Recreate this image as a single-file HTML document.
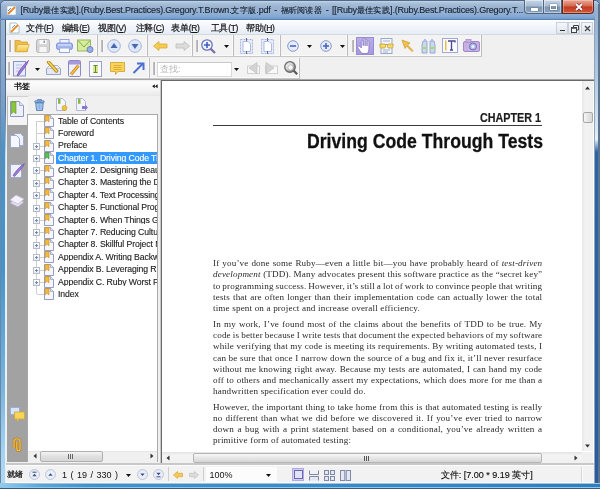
<!DOCTYPE html><html><head><meta charset="utf-8"><style>
*{margin:0;padding:0;box-sizing:border-box}
html,body{width:600px;height:489px;overflow:hidden;background:#6f93bc;font-family:"Liberation Sans",sans-serif;}
.a{position:absolute;display:block}
.t{position:absolute;white-space:nowrap;line-height:1}
</style></head><body><div class="a" style="left:0;top:0;width:600px;height:489px;overflow:hidden;filter:blur(0.3px)">
<div class="a" style="left:0;top:0;width:600px;height:489px;background:linear-gradient(180deg,#aac6e4 0,#bcd3eb 8px,#a6c2e2 18px,#8ab0da 40px,#5ea3d3 150px,#4496cd 300px,#3d8cc8 489px);border-radius:5px 5px 0 0;border:1px solid #4f6b8c"></div>
<div class="a" style="left:1px;top:1px;width:598px;height:19px;border-radius:5px 5px 0 0;background:linear-gradient(#c6d6e8 0,#aac0d8 2px,#9cb4d2 6px,#94b0d2 12px,#80a8d6 16px,#6e98c8 18px,#4c6c92 19px)"></div>
<div class="a" style="left:0;top:18px;width:1px;height:466px;background:#6d87a3"></div>
<div class="a" style="left:1px;top:20px;width:4px;height:464px;background:linear-gradient(#98b4d4,#7aa0cc 80px,#4a92c8 130px,#4494cc 250px,#78b6e0 370px,#a4d2f0 430px,#b0d8f2 464px)"></div>
<div class="a" style="left:5px;top:20px;width:1px;height:464px;background:linear-gradient(#4a5c74,#5a7090 90px,#c8dcee 135px,#e2eef8 200px,#e8f2fa)"></div>
<div class="a" style="left:594px;top:20px;width:1px;height:464px;background:#8fa5bd"></div>
<div class="a" style="left:595px;top:14px;width:3px;height:470px;background:linear-gradient(#98b0cc,#b0c8e0 60px,#dce8f4 118px,#eaf2fa 125px,#2e64a4 138px,#2a5c9c 484px)"></div>
<div class="a" style="left:598px;top:4px;width:2px;height:485px;background:#5a7490"></div>
<div class="a" style="left:0;top:483px;width:600px;height:1px;background:#9ec4e0"></div>
<div class="a" style="left:0;top:484px;width:600px;height:3px;background:linear-gradient(90deg,#90ccee,#5aa6da 40px,#3f92cc 90px,#3a8cc8 50%,#2f7fc0)"></div>
<div class="a" style="left:0;top:487px;width:600px;height:1px;background:#8cc8ec"></div>
<div class="a" style="left:0;top:488px;width:600px;height:1px;background:#3d5a78"></div>
<svg class="a" style="left:7px;top:6px" width="9" height="9" viewBox="0 0 9 9"><rect x="0" y="0" width="9" height="9" fill="#fff" stroke="#9ab" stroke-width=".6"/><path d="M1 8 L8 1" stroke="#e58a2a" stroke-width="2"/><path d="M1 5 L4 2" stroke="#5a8ac8" stroke-width="1"/></svg>
<div class="t" id="TT" style="left:20.5px;top:6px;font-size:9px;letter-spacing:-0.2px;word-spacing:1.3px;color:#1a2636;-webkit-text-stroke:0.15px #1a2636">[Ruby<span style="font-size:8px;font-weight:500;letter-spacing:0.3px">最佳实践</span>].(Ruby.Best.Practices).Gregory.T.Brown.<span style="font-size:8px;font-weight:500;letter-spacing:0.3px">文字版</span>.pdf - <span style="font-size:8px;font-weight:500;letter-spacing:0.3px">福昕阅读器</span> - [[Ruby<span style="font-size:8px;font-weight:500;letter-spacing:0.3px">最佳实践</span>].(Ruby.Best.Practices).Gregory.T...</div>
<div class="a" style="left:524px;top:0;width:20px;height:14px;background:linear-gradient(#c8d6e6,#a8bcd4 45%,#7d96b4 55%,#8aa4c2);border:1px solid #4f6580;border-top:none;border-radius:0 0 0 4px;box-shadow:inset 0 0 0 1px rgba(255,255,255,.45)"></div>
<div class="a" style="left:531px;top:8px;width:7px;height:2.5px;background:#fff;box-shadow:0 0 1px #223"></div>
<div class="a" style="left:543px;top:0;width:19px;height:14px;background:linear-gradient(#c8d6e6,#a8bcd4 45%,#7d96b4 55%,#8aa4c2);border:1px solid #4f6580;border-top:none;box-shadow:inset 0 0 0 1px rgba(255,255,255,.45)"></div>
<div class="a" style="left:549.5px;top:4px;width:7px;height:6px;border:1px solid #fff;border-top-width:2px;box-shadow:0 0 1px #223,inset 0 0 1px #223"></div>
<div class="a" style="left:562px;top:0;width:32px;height:14px;background:linear-gradient(#eaa898,#d66a50 45%,#c23a20 55%,#d05a3a);border:1px solid #5a2a24;border-top:none;border-radius:0 0 4px 0;box-shadow:inset 0 0 0 1px rgba(255,220,210,.4)"></div>
<svg class="a" style="left:574.5px;top:3px" width="8" height="8" viewBox="0 0 8 8"><path d="M1 1L7 7M7 1L1 7" stroke="#5a2020" stroke-width="3"/><path d="M1 1L7 7M7 1L1 7" stroke="#fff" stroke-width="1.8"/></svg>
<div class="a" style="left:6px;top:20px;width:588px;height:15px;background:linear-gradient(#fcfdfe,#eef3f9 60%,#e4ebf4)"></div>
<svg class="a" style="left:9px;top:22px" width="11" height="12" viewBox="0 0 11 12"><path d="M1 1h6l3 3v7H1z" fill="#fff" stroke="#8aa" stroke-width=".7"/><path d="M2 10 L9 3" stroke="#e8902e" stroke-width="2"/><path d="M3 6 L6 3" stroke="#6a9ad0" stroke-width="1"/></svg>
<div class="t" style="left:26px;top:23.5px;font-size:8.5px;letter-spacing:-0.4px;color:#141414;-webkit-text-stroke:0.2px #141414"><span style="font-size:9px;font-weight:500;letter-spacing:-0.1px">文件</span>(<u>F</u>)</div>
<div class="t" style="left:61.5px;top:23.5px;font-size:8.5px;letter-spacing:-0.4px;color:#141414;-webkit-text-stroke:0.2px #141414"><span style="font-size:9px;font-weight:500;letter-spacing:-0.1px">编辑</span>(<u>E</u>)</div>
<div class="t" style="left:98px;top:23.5px;font-size:8.5px;letter-spacing:-0.4px;color:#141414;-webkit-text-stroke:0.2px #141414"><span style="font-size:9px;font-weight:500;letter-spacing:-0.1px">视图</span>(<u>V</u>)</div>
<div class="t" style="left:135.5px;top:23.5px;font-size:8.5px;letter-spacing:-0.4px;color:#141414;-webkit-text-stroke:0.2px #141414"><span style="font-size:9px;font-weight:500;letter-spacing:-0.1px">注释</span>(<u>C</u>)</div>
<div class="t" style="left:171px;top:23.5px;font-size:8.5px;letter-spacing:-0.4px;color:#141414;-webkit-text-stroke:0.2px #141414"><span style="font-size:9px;font-weight:500;letter-spacing:-0.1px">表单</span>(<u>R</u>)</div>
<div class="t" style="left:210.5px;top:23.5px;font-size:8.5px;letter-spacing:-0.4px;color:#141414;-webkit-text-stroke:0.2px #141414"><span style="font-size:9px;font-weight:500;letter-spacing:-0.1px">工具</span>(<u>T</u>)</div>
<div class="t" style="left:246px;top:23.5px;font-size:8.5px;letter-spacing:-0.4px;color:#141414;-webkit-text-stroke:0.2px #141414"><span style="font-size:9px;font-weight:500;letter-spacing:-0.1px">帮助</span>(<u>H</u>)</div>
<div class="a" style="left:556px;top:22px;width:12px;height:12px;background:linear-gradient(#f4f6f9,#e0e6ee);border:1px solid #c8d0da"></div>
<div class="a" style="left:560px;top:30px;width:5px;height:1px;background:#333"></div>
<div class="a" style="left:568px;top:22px;width:12px;height:12px;background:linear-gradient(#f4f6f9,#e0e6ee);border:1px solid #c8d0da"></div>
<svg class="a" style="left:570.5px;top:24.5px" width="8" height="8" viewBox="0 0 8 8"><path d="M2.5 .5h5v4.5h-2M2.5 .5v2" fill="none" stroke="#444" stroke-width="1"/><rect x=".5" y="2.5" width="5" height="5" fill="#f0f3f8" stroke="#444" stroke-width="1"/><path d="M.5 3h5" stroke="#444" stroke-width="1.5"/></svg>
<div class="a" style="left:581px;top:22px;width:12px;height:12px;background:linear-gradient(#f4f6f9,#e0e6ee);border:1px solid #c8d0da"></div>
<svg class="a" style="left:583.5px;top:25px" width="7" height="7" viewBox="0 0 7 7"><path d="M1 1L6 6M6 1L1 6" stroke="#444" stroke-width="1.2"/></svg>
<div class="a" style="left:6px;top:35px;width:588px;height:45px;background:#f0f0f0"></div>
<div class="a" style="left:6px;top:79px;width:588px;height:1px;background:#a8a8a8"></div>
<div class="a" style="left:6px;top:34px;width:588px;height:1px;background:#d4d8e0"></div>
<div class="a" style="left:6px;top:35px;width:92px;height:22px;background:#f3f3f3;border-right:1px solid #bcbcbc;border-bottom:1px solid #c8c8c8;box-shadow:inset -1px -1px 0 #fafafa"></div>
<div class="a" style="left:98px;top:35px;width:50px;height:22px;background:#f3f3f3;border-right:1px solid #bcbcbc;border-bottom:1px solid #c8c8c8;box-shadow:inset -1px -1px 0 #fafafa"></div>
<div class="a" style="left:148px;top:35px;width:45px;height:22px;background:#f3f3f3;border-right:1px solid #bcbcbc;border-bottom:1px solid #c8c8c8;box-shadow:inset -1px -1px 0 #fafafa"></div>
<div class="a" style="left:193px;top:35px;width:41px;height:22px;background:#f3f3f3;border-right:1px solid #bcbcbc;border-bottom:1px solid #c8c8c8;box-shadow:inset -1px -1px 0 #fafafa"></div>
<div class="a" style="left:234px;top:35px;width:47px;height:22px;background:#f3f3f3;border-right:1px solid #bcbcbc;border-bottom:1px solid #c8c8c8;box-shadow:inset -1px -1px 0 #fafafa"></div>
<div class="a" style="left:281px;top:35px;width:67px;height:22px;background:#f3f3f3;border-right:1px solid #bcbcbc;border-bottom:1px solid #c8c8c8;box-shadow:inset -1px -1px 0 #fafafa"></div>
<div class="a" style="left:348px;top:35px;width:134px;height:22px;background:#f3f3f3;border-right:1px solid #bcbcbc;border-bottom:1px solid #c8c8c8;box-shadow:inset -1px -1px 0 #fafafa"></div>
<div class="a" style="left:6px;top:58px;width:144px;height:21px;background:#f3f3f3;border-right:1px solid #bcbcbc;border-bottom:1px solid #c8c8c8;box-shadow:inset -1px -1px 0 #fafafa"></div>
<div class="a" style="left:150px;top:58px;width:150px;height:21px;background:#f3f3f3;border-right:1px solid #bcbcbc;border-bottom:1px solid #c8c8c8;box-shadow:inset -1px -1px 0 #fafafa"></div>
<div class="a" style="left:8.5px;top:40px;width:3px;height:12px;background:linear-gradient(90deg,#c8c8c8,#b0b0b0 50%,#f8f8f8 70%)"></div>
<div class="a" style="left:100.5px;top:40px;width:3px;height:12px;background:linear-gradient(90deg,#c8c8c8,#b0b0b0 50%,#f8f8f8 70%)"></div>
<div class="a" style="left:195.5px;top:40px;width:3px;height:12px;background:linear-gradient(90deg,#c8c8c8,#b0b0b0 50%,#f8f8f8 70%)"></div>
<div class="a" style="left:351.5px;top:40px;width:3px;height:12px;background:linear-gradient(90deg,#c8c8c8,#b0b0b0 50%,#f8f8f8 70%)"></div>
<div class="a" style="left:7.5px;top:62px;width:3px;height:13px;background:linear-gradient(90deg,#c8c8c8,#b0b0b0 50%,#f8f8f8 70%)"></div>
<div class="a" style="left:152.5px;top:62px;width:3px;height:13px;background:linear-gradient(90deg,#c8c8c8,#b0b0b0 50%,#f8f8f8 70%)"></div>
<svg class="a" style="left:14px;top:39px" width="16" height="14" viewBox="0 0 16 14"><defs><linearGradient id="fg" x1="0" y1="0" x2="0" y2="1"><stop offset="0" stop-color="#fdeaa0"/><stop offset="1" stop-color="#f2c244"/></linearGradient></defs><path d="M1 1.5h5l1.5 1.5h6v9.5H1z" fill="#eebc48" stroke="#d0a038" stroke-width=".8"/><path d="M1.2 12.8 L3.8 5.5h11.5l-2.6 7.3z" fill="url(#fg)" stroke="#d8a838" stroke-width=".8"/></svg>
<svg class="a" style="left:36px;top:39px" width="14" height="14" viewBox="0 0 14 14"><rect x=".5" y=".5" width="13" height="13" rx="2" fill="#d6d6d6" stroke="#b4b4b4"/><rect x="3.5" y="1" width="7" height="4" fill="#fafafa"/><rect x="7.5" y="1.5" width="1.5" height="2.5" fill="#9a9a9a"/><rect x="3" y="7.5" width="8" height="6" fill="#f6f6f6" stroke="#c4c4c4" stroke-width=".6"/></svg>
<svg class="a" style="left:56px;top:39px" width="17" height="14" viewBox="0 0 17 14"><rect x="4" y=".5" width="9" height="5" fill="#f0f4ff" stroke="#98a8dc"/><rect x=".5" y="4" width="16" height="6.5" rx="2" fill="#a4b6ee" stroke="#8292d4"/><rect x="2" y="5" width="13" height="2" fill="#c4d0f6"/><rect x="3.5" y="9" width="10" height="4.5" fill="#f8faff" stroke="#98a8dc"/></svg>
<svg class="a" style="left:77px;top:39px" width="17" height="14" viewBox="0 0 17 14"><rect x=".5" y="1" width="13" height="11" fill="#d4ec9c" stroke="#98b860"/><path d="M1 1.5 L7 8 L13 1.5" stroke="#88a850" fill="none"/><circle cx="13" cy="10.5" r="3" fill="#98b0e8" stroke="#6070b8" stroke-width=".8"/></svg>
<svg class="a" style="left:107px;top:39px" width="14" height="14" viewBox="0 0 14 14"><circle cx="7.0" cy="7.0" r="6.3" fill="#e4ecfc" stroke="#a0b0d8" stroke-width="1"/><circle cx="7.0" cy="7.0" r="4.5" fill="#dce6fa"/><path d="M3.5 9.0h7L7.0 4.0z" fill="#4a68b0"/></svg>
<svg class="a" style="left:128px;top:39px" width="14" height="14" viewBox="0 0 14 14"><circle cx="7.0" cy="7.0" r="6.3" fill="#e4ecfc" stroke="#a0b0d8" stroke-width="1"/><circle cx="7.0" cy="7.0" r="4.5" fill="#dce6fa"/><path d="M3.5 5.0h7L7.0 10.0z" fill="#4a68b0"/></svg>
<svg class="a" style="left:153px;top:41px" width="15" height="10" viewBox="0 0 15 10"><path d="M.5 5 L6 .5 V3 H14 V7 H6 V9.5z" fill="#f5cc50" stroke="#d8a838" stroke-width=".8"/></svg>
<svg class="a" style="left:175px;top:41px" width="15" height="10" viewBox="0 0 15 10"><path d="M14.5 5 L9 .5 V3 H1 V7 H9 V9.5z" fill="#dcdcdc" stroke="#bdbdbd" stroke-width=".8"/></svg>
<svg class="a" style="left:201px;top:39px" width="15" height="15" viewBox="0 0 15 15"><circle cx="6" cy="6" r="5.2" fill="#f4f6ff" stroke="#6a70b8" stroke-width="1.3"/><path d="M6 3v6M3 6h6" stroke="#3a60c0" stroke-width="1.6"/><path d="M9.5 9.5 L14 14" stroke="#7a6aa8" stroke-width="2.2"/></svg>
<svg class="a" style="left:224px;top:45px" width="5" height="3" viewBox="0 0 5 3"><path d="M0 0h5L2.5 3z" fill="#111"/></svg>
<svg class="a" style="left:239.5px;top:38px" width="13" height="16" viewBox="0 0 13 16"><rect x=".5" y="1.5" width="12" height="14" fill="#e6ecfa" stroke="#a8b6e0" stroke-dasharray="2 1"/><path d="M3 3.5h5l2.5 2.5v7.5H3z" fill="#fff" stroke="#9aa8dc" stroke-width=".8"/><path d="M6.5 0v3M6.5 13v3" stroke="#5a6ab0"/></svg>
<svg class="a" style="left:260.5px;top:38px" width="13" height="16" viewBox="0 0 13 16"><rect x=".5" y="1.5" width="12" height="14" fill="#e6ecfa" stroke="#a8b6e0" stroke-dasharray="2 1"/><path d="M3 3.5h5l2.5 2.5v7.5H3z" fill="#fff" stroke="#9aa8dc" stroke-width=".8"/><path d="M6.5 0v3M6.5 13v3" stroke="#5a6ab0"/></svg>
<svg class="a" style="left:286.5px;top:40px" width="12" height="12" viewBox="0 0 12 12"><circle cx="6" cy="6" r="5.3" fill="#e6ecfc" stroke="#8898d0"/><path d="M3 6h6" stroke="#4a68b8" stroke-width="1.6"/></svg>
<svg class="a" style="left:307px;top:45px" width="5" height="3" viewBox="0 0 5 3"><path d="M0 0h5L2.5 3z" fill="#111"/></svg>
<svg class="a" style="left:319.5px;top:40px" width="12" height="12" viewBox="0 0 12 12"><circle cx="6" cy="6" r="5.3" fill="#e6ecfc" stroke="#8898d0"/><path d="M3 6h6" stroke="#4a68b8" stroke-width="1.6"/><path d="M6 3v6" stroke="#4a68b8" stroke-width="1.6"/></svg>
<svg class="a" style="left:340px;top:45px" width="5" height="3" viewBox="0 0 5 3"><path d="M0 0h5L2.5 3z" fill="#111"/></svg>
<div class="a" style="left:356px;top:37px;width:18px;height:18px;background:linear-gradient(#b8aee8,#a698dc);border:1px solid #9a8ad4"></div>
<svg class="a" style="left:357px;top:38px" width="16" height="16" viewBox="0 0 16 16"><path d="M5 15.5 C3.5 13.5 1 10.5 .8 9.3 C.6 8 2 7.6 3 8.6 L4.3 10 V3.3 C4.3 2 6.2 2 6.2 3.3 V7.8 V1.6 C6.2 .3 8.1 .3 8.1 1.6 V7.8 V2 C8.1 .7 10 .7 10 2 V8 V3.5 C10 2.2 11.9 2.2 11.9 3.5 V10 C11.9 12.5 11.2 14 10.5 15.5z" fill="#fff" stroke="#7c6cc4" stroke-width=".7"/></svg>
<svg class="a" style="left:379px;top:38px" width="15" height="16" viewBox="0 0 15 16"><rect x="2" y=".5" width="11" height="15" fill="#f2f5fc" stroke="#98a8c8"/><path d="M4 3h7M4 12h7M4 14h5" stroke="#a8b4d0"/><path d="M.5 6.5h14" stroke="#c8a030" stroke-width="1"/><rect x="1" y="6" width="5.5" height="4" rx="1.2" fill="#f4d870" stroke="#c8a030" stroke-width=".8"/><rect x="8.5" y="6" width="5.5" height="4" rx="1.2" fill="#f4d870" stroke="#c8a030" stroke-width=".8"/></svg>
<svg class="a" style="left:401px;top:39px" width="13" height="13" viewBox="0 0 13 13"><path d="M1 1 L9 4 L6.5 6 L12 11.5 L11 12.5 L5.5 7 L4 9.5z" fill="#f4c048" stroke="#c89830" stroke-width=".7"/></svg>
<svg class="a" style="left:421px;top:38px" width="15" height="16" viewBox="0 0 15 16"><path d="M2 3h4v12H1V7z" fill="#c8d8f0" stroke="#8a9ac8" stroke-width=".8"/><path d="M9 3h4l1 4v8H9z" fill="#c8d8f0" stroke="#8a9ac8" stroke-width=".8"/><rect x="1.3" y="9" width="4.5" height="2" fill="#a8d870"/><rect x="9.3" y="9" width="4.5" height="2" fill="#a8d870"/><rect x="3" y="1" width="2" height="2" fill="#b0c0e0"/><rect x="10" y="1" width="2" height="2" fill="#b0c0e0"/></svg>
<svg class="a" style="left:442px;top:38px" width="16" height="15" viewBox="0 0 16 15"><rect x=".5" y=".5" width="15" height="14" fill="#fbfbff" stroke="#a0a8d8"/><rect x="3" y="2.5" width="1.5" height="10" fill="#e8c040"/><path d="M6 3h7v1.5M9.5 3v9M8 12h3" stroke="#4a4a8a" stroke-width="1.3" fill="none"/></svg>
<svg class="a" style="left:463px;top:39px" width="17" height="13" viewBox="0 0 17 13"><rect x=".5" y="2.5" width="16" height="10" rx="1.5" fill="#c8b0e0" stroke="#a088c8"/><rect x="3" y=".5" width="5" height="3" fill="#c8b0e0" stroke="#a088c8" stroke-width=".7"/><circle cx="10" cy="7.5" r="3.5" fill="#a8c0f0" stroke="#7a6ab8"/><circle cx="10" cy="7.5" r="1.5" fill="#eef"/></svg>
<svg class="a" style="left:13px;top:60px" width="16" height="17" viewBox="0 0 16 17"><rect x=".5" y="1.5" width="12" height="14.5" fill="#e8ecfa" stroke="#8a94c8"/><path d="M3 5h6M3 8h5M3 11h4" stroke="#aab2d8" stroke-width=".8"/><path d="M4 15.5 C6 11 9 6 15.5 .5 C14 5 10 10 5.5 15.5z" fill="#9a7ad0" stroke="#6a4aa8" stroke-width=".7"/></svg>
<svg class="a" style="left:35px;top:68px" width="5" height="3" viewBox="0 0 5 3"><path d="M0 0h5L2.5 3z" fill="#111"/></svg>
<svg class="a" style="left:46px;top:61px" width="15" height="14" viewBox="0 0 15 14"><path d="M.5 7.5h14v6h-14z" fill="#e4e8f6" stroke="#98a4c8"/><path d="M.5 7.5l3-3h8l3 3" fill="#f0f2fa" stroke="#98a4c8" stroke-width=".8"/><path d="M2.5 1 L10.5 10" stroke="#b88a20" stroke-width="3.4" stroke-linecap="round"/><path d="M2.5 1 L10.5 10" stroke="#f8d860" stroke-width="1.6" stroke-linecap="round"/></svg>
<svg class="a" style="left:68px;top:60px" width="13" height="17" viewBox="0 0 13 17"><rect x=".5" y=".5" width="12" height="16" rx="1" fill="#eef0fc" stroke="#8a88c8"/><rect x="1" y="1" width="11" height="3.5" fill="#a898dc"/><path d="M3 14.5 L10.5 5.5" stroke="#c88020" stroke-width="3"/><path d="M3 14.5 L10.5 5.5" stroke="#f8c040" stroke-width="1.6"/></svg>
<svg class="a" style="left:89px;top:61px" width="13" height="16" viewBox="0 0 13 16"><rect x=".5" y=".5" width="12" height="15" fill="#fbfbff" stroke="#98a0d0"/><rect x="4" y="4" width="5" height="8" fill="#d8e890"/><path d="M4.5 4.5h4M6.5 4.5v7M4.5 11.5h4" stroke="#6a8a30" stroke-width="1"/></svg>
<svg class="a" style="left:110px;top:62px" width="15" height="13" viewBox="0 0 15 13"><path d="M.5 .5h14v9H8l-2.5 3V9.5h-5z" fill="#f8d458" stroke="#d0a838" stroke-width=".9"/><path d="M3.5 3.5h8M3.5 5.5h8M3.5 7.5h8" stroke="#d8a030" stroke-width=".8"/></svg>
<svg class="a" style="left:132px;top:62px" width="13" height="12" viewBox="0 0 13 12"><path d="M1.5 11 L11 1.5" stroke="#4a70d0" stroke-width="2"/><path d="M5 1.5 H11.5 V8" stroke="#4a70d0" stroke-width="2" fill="none"/></svg>
<div class="a" style="left:157px;top:61.5px;width:75px;height:15px;background:#fff;border:1px solid #d8d8d8;border-top-color:#c8c8c8"></div>
<div class="t" style="left:160px;top:65px;font-size:8.5px;color:#b8b8b8">查找:</div>
<svg class="a" style="left:234px;top:68px" width="5" height="3" viewBox="0 0 5 3"><path d="M0 0h5L2.5 3z" fill="#111"/></svg>
<svg class="a" style="left:246.5px;top:62px" width="13" height="12" viewBox="0 0 13 12"><rect x=".5" y="4" width="12" height="7.5" fill="#f8f8f8" stroke="#d0d0d0"/><path d="M10 .5 L2 6 L10 11.5z" fill="#d4d4d4" stroke="#c0c0c0" stroke-width=".7"/></svg>
<svg class="a" style="left:264px;top:62px" width="14" height="12" viewBox="0 0 14 12"><rect x="1.5" y="4" width="12" height="7.5" fill="#f8f8f8" stroke="#d0d0d0"/><path d="M2 .5 L10 6 L2 11.5z" fill="#d4d4d4" stroke="#c0c0c0" stroke-width=".7"/></svg>
<svg class="a" style="left:283.5px;top:61px" width="14" height="14" viewBox="0 0 14 14"><defs><radialGradient id="sg" cx=".4" cy=".4" r=".6"><stop offset="0" stop-color="#f4f4f4"/><stop offset=".55" stop-color="#d8d8d8"/><stop offset="1" stop-color="#7a7a7a"/></radialGradient></defs><circle cx="6" cy="6" r="5.3" fill="url(#sg)" stroke="#6a6a6a" stroke-width="1.2"/><circle cx="6.5" cy="6.5" r="2.6" fill="#fafafa" stroke="#9a9a9a" stroke-width=".6"/><path d="M9.8 9.8 L13.2 13.2" stroke="#555" stroke-width="2.2"/></svg>
<div class="a" style="left:6px;top:80px;width:155px;height:384px;background:#f0f0f0"></div>
<div class="a" style="left:6px;top:80.5px;width:154px;height:15px;background:linear-gradient(#fcfcfc,#f4f4f4 60%,#e8e8e8)"></div>
<div class="t" style="left:14px;top:83px;font-size:8px;color:#111;font-weight:bold;letter-spacing:0.4px">书签</div>
<svg class="a" style="left:152px;top:84px" width="6" height="5" viewBox="0 0 6 5"><path d="M2.8 .3 L.2 2.3 L2.8 4.3z M5.6 .3 L3 2.3 L5.6 4.3z" fill="#111"/></svg>
<div class="a" style="left:7px;top:125px;width:20px;height:337px;background:#a2a2a2"></div>
<div class="a" style="left:7px;top:96px;width:21px;height:29px;background:#f4f4f4;border-left:1px solid #b8b8b8;border-top:1px solid #d0d0d0"></div>
<svg class="a" style="left:10px;top:101px" width="14" height="16" viewBox="0 0 14 16"><path d="M.5 .5h9l4 4v11H.5z" fill="#eef0f8" stroke="#8e98c0"/><path d="M9.5 .5v4h4" fill="#dde2f0" stroke="#8e98c0" stroke-width=".7"/><path d="M1.5 .8h4.5v12l-2.2-2-2.3 2z" fill="#8cc43c" stroke="#5a9428" stroke-width=".6"/></svg>
<svg class="a" style="left:10px;top:133px" width="14" height="15" viewBox="0 0 14 15"><path d="M4.5 .5h6l3 3v9h-9z" fill="#eef2fc" stroke="#a0aad0"/><path d="M.5 2.5h6l3 3v9h-9z" fill="#f6f8ff" stroke="#a0aad0"/></svg>
<svg class="a" style="left:10px;top:163px" width="15" height="15" viewBox="0 0 15 15"><rect x=".5" y="1.5" width="11" height="13" fill="#eef0fa" stroke="#a0a8d0"/><path d="M3 12.5 C5 9 9 4 14.5 .5 C13 4 9 9 4.5 13.5z" fill="#9a7ad0" stroke="#6a4aa8" stroke-width=".6"/></svg>
<svg class="a" style="left:9px;top:193px" width="16" height="15" viewBox="0 0 16 15"><path d="M1 10 L7 5 L15 9 L9 14z" fill="#e4dcf0" stroke="#b0a8cc" stroke-width=".7"/><path d="M1 7 L7 2 L15 6 L9 11z" fill="#f6f2fc" stroke="#c0b8d8" stroke-width=".7"/></svg>
<svg class="a" style="left:9.5px;top:407px" width="15" height="15" viewBox="0 0 15 15"><rect x=".5" y=".5" width="9" height="7" fill="#d8e4fa" stroke="#98a8d8" stroke-width=".8"/><rect x="4.5" y="5" width="10" height="7" fill="#f8d458" stroke="#d0a838" stroke-width=".8"/><path d="M7 12 L7 14.5 L9 12" fill="#f8d458" stroke="#d0a838" stroke-width=".6"/></svg>
<svg class="a" style="left:11.5px;top:437px" width="10" height="15" viewBox="0 0 10 15"><path d="M2 11 V4.5 C2 .8 8 .8 8 4.5 V11.5 C8 14.5 4.8 14.5 4.8 11.5 V5" stroke="#b88020" stroke-width="2.6" fill="none"/><path d="M2 11 V4.5 C2 .8 8 .8 8 4.5 V11.5 C8 14.5 4.8 14.5 4.8 11.5 V5" stroke="#f0c050" stroke-width="1.2" fill="none"/></svg>
<svg class="a" style="left:34px;top:99px" width="11" height="12" viewBox="0 0 11 12"><rect x=".8" y="1.8" width="9.4" height="1.8" rx=".6" fill="#9cc0ea" stroke="#3e6aa8" stroke-width=".7"/><rect x="3.8" y=".3" width="3.4" height="1.6" fill="#9cc0ea" stroke="#3e6aa8" stroke-width=".6"/><path d="M1.8 4h7.4l-.7 7.4H2.5z" fill="#b4d2f2" stroke="#3e6aa8" stroke-width=".8"/><path d="M4 5.2v5M5.5 5.2v5M7 5.2v5" stroke="#6a98d0" stroke-width=".6"/></svg>
<svg class="a" style="left:56px;top:98px" width="12" height="13" viewBox="0 0 12 13"><path d="M.5 .5h6l3 3v9h-9z" fill="#f4f4fc" stroke="#a0a8d0" stroke-width=".8"/><rect x="2" y=".8" width="2.5" height="5" fill="#88b848"/><circle cx="8.5" cy="10" r="2.5" fill="#f0c040" stroke="#c8a030" stroke-width=".6"/></svg>
<svg class="a" style="left:76px;top:98px" width="12" height="13" viewBox="0 0 12 13"><path d="M.5 .5h6l3 3v9h-9z" fill="#f4f4fc" stroke="#a0a8d0" stroke-width=".8"/><rect x="2" y=".8" width="2.5" height="5" fill="#88b848"/><path d="M6 8h3V6.5l3 3-3 3V11H6z" fill="#8a78d0"/></svg>
<div class="a" style="left:27px;top:114px;width:131px;height:348px;background:#fff;border:1px solid #a8a8a8;border-bottom:none"></div>
<div class="a" style="left:36px;top:120.7px;width:0;height:173.46px;border-left:1px solid #cfcfcf"></div>
<div class="a" style="left:37px;top:120.90px;width:7px;height:0;border-top:1px solid #cfcfcf"></div>
<svg class="a" style="left:44px;top:115.0px" width="10" height="12" viewBox="0 0 10 12"><path d="M.5 .5h6l3 3v8h-9z" fill="#f6f7fc" stroke="#7c86b4" stroke-width=".8"/><path d="M6.5 .5v3h3" fill="#e4e8f4" stroke="#7c86b4" stroke-width=".6"/><path d="M1.2 .6h3.8v6.2L3.1 5.3 1.2 6.8z" fill="#f4bc34" stroke="#c88a20" stroke-width=".6"/></svg>
<div class="t" style="left:58px;top:116.50px;font-size:8.7px;letter-spacing:-0.1px;color:#1c1c1c;-webkit-text-stroke:0.12px #1c1c1c;width:99px;overflow:hidden">Table of Contents</div>
<div class="a" style="left:37px;top:133.29px;width:7px;height:0;border-top:1px solid #cfcfcf"></div>
<svg class="a" style="left:44px;top:127.39px" width="10" height="12" viewBox="0 0 10 12"><path d="M.5 .5h6l3 3v8h-9z" fill="#f6f7fc" stroke="#7c86b4" stroke-width=".8"/><path d="M6.5 .5v3h3" fill="#e4e8f4" stroke="#7c86b4" stroke-width=".6"/><path d="M1.2 .6h3.8v6.2L3.1 5.3 1.2 6.8z" fill="#f4bc34" stroke="#c88a20" stroke-width=".6"/></svg>
<div class="t" style="left:58px;top:128.89px;font-size:8.7px;letter-spacing:-0.1px;color:#1c1c1c;-webkit-text-stroke:0.12px #1c1c1c;width:99px;overflow:hidden">Foreword</div>
<div class="a" style="left:37px;top:145.68px;width:7px;height:0;border-top:1px solid #cfcfcf"></div>
<div class="a" style="left:33px;top:142.68px;width:7px;height:7px;background:linear-gradient(#fff,#e8ecf4);border:1px solid #b4bccc"></div><div class="a" style="left:35px;top:145.68px;width:3px;height:1px;background:#7a88a8"></div><div class="a" style="left:36px;top:144.68px;width:1px;height:3px;background:#7a88a8"></div>
<svg class="a" style="left:44px;top:139.78px" width="10" height="12" viewBox="0 0 10 12"><path d="M.5 .5h6l3 3v8h-9z" fill="#f6f7fc" stroke="#7c86b4" stroke-width=".8"/><path d="M6.5 .5v3h3" fill="#e4e8f4" stroke="#7c86b4" stroke-width=".6"/><path d="M1.2 .6h3.8v6.2L3.1 5.3 1.2 6.8z" fill="#f4bc34" stroke="#c88a20" stroke-width=".6"/></svg>
<div class="t" style="left:58px;top:141.28px;font-size:8.7px;letter-spacing:-0.1px;color:#1c1c1c;-webkit-text-stroke:0.12px #1c1c1c;width:99px;overflow:hidden">Preface</div>
<div class="a" style="left:37px;top:158.07px;width:7px;height:0;border-top:1px solid #cfcfcf"></div>
<div class="a" style="left:33px;top:155.07px;width:7px;height:7px;background:linear-gradient(#fff,#e8ecf4);border:1px solid #b4bccc"></div><div class="a" style="left:35px;top:158.07px;width:3px;height:1px;background:#7a88a8"></div><div class="a" style="left:36px;top:157.07px;width:1px;height:3px;background:#7a88a8"></div>
<svg class="a" style="left:44px;top:152.17px" width="10" height="12" viewBox="0 0 10 12"><path d="M.5 .5h6l3 3v8h-9z" fill="#f6f7fc" stroke="#7c86b4" stroke-width=".8"/><path d="M6.5 .5v3h3" fill="#e4e8f4" stroke="#7c86b4" stroke-width=".6"/><path d="M1.2 .6h3.8v6.2L3.1 5.3 1.2 6.8z" fill="#5cc04a" stroke="#3a8a30" stroke-width=".6"/></svg>
<div class="a" style="left:56px;top:152.17px;width:101px;height:11.8px;background:#3399ff"></div>
<div class="t" style="left:58px;top:153.67px;font-size:8.7px;letter-spacing:-0.1px;color:#fff;-webkit-text-stroke:0.12px #fff;width:99px;overflow:hidden">Chapter 1. Driving Code Through Tests</div>
<div class="a" style="left:37px;top:170.46px;width:7px;height:0;border-top:1px solid #cfcfcf"></div>
<div class="a" style="left:33px;top:167.46px;width:7px;height:7px;background:linear-gradient(#fff,#e8ecf4);border:1px solid #b4bccc"></div><div class="a" style="left:35px;top:170.46px;width:3px;height:1px;background:#7a88a8"></div><div class="a" style="left:36px;top:169.46px;width:1px;height:3px;background:#7a88a8"></div>
<svg class="a" style="left:44px;top:164.56px" width="10" height="12" viewBox="0 0 10 12"><path d="M.5 .5h6l3 3v8h-9z" fill="#f6f7fc" stroke="#7c86b4" stroke-width=".8"/><path d="M6.5 .5v3h3" fill="#e4e8f4" stroke="#7c86b4" stroke-width=".6"/><path d="M1.2 .6h3.8v6.2L3.1 5.3 1.2 6.8z" fill="#f4bc34" stroke="#c88a20" stroke-width=".6"/></svg>
<div class="t" style="left:58px;top:166.06px;font-size:8.7px;letter-spacing:-0.1px;color:#1c1c1c;-webkit-text-stroke:0.12px #1c1c1c;width:99px;overflow:hidden">Chapter 2. Designing Beautiful APIs</div>
<div class="a" style="left:37px;top:182.85px;width:7px;height:0;border-top:1px solid #cfcfcf"></div>
<div class="a" style="left:33px;top:179.85px;width:7px;height:7px;background:linear-gradient(#fff,#e8ecf4);border:1px solid #b4bccc"></div><div class="a" style="left:35px;top:182.85px;width:3px;height:1px;background:#7a88a8"></div><div class="a" style="left:36px;top:181.85px;width:1px;height:3px;background:#7a88a8"></div>
<svg class="a" style="left:44px;top:176.95px" width="10" height="12" viewBox="0 0 10 12"><path d="M.5 .5h6l3 3v8h-9z" fill="#f6f7fc" stroke="#7c86b4" stroke-width=".8"/><path d="M6.5 .5v3h3" fill="#e4e8f4" stroke="#7c86b4" stroke-width=".6"/><path d="M1.2 .6h3.8v6.2L3.1 5.3 1.2 6.8z" fill="#f4bc34" stroke="#c88a20" stroke-width=".6"/></svg>
<div class="t" style="left:58px;top:178.45px;font-size:8.7px;letter-spacing:-0.1px;color:#1c1c1c;-webkit-text-stroke:0.12px #1c1c1c;width:99px;overflow:hidden">Chapter 3. Mastering the Dynamic Toolkit</div>
<div class="a" style="left:37px;top:195.24px;width:7px;height:0;border-top:1px solid #cfcfcf"></div>
<div class="a" style="left:33px;top:192.24px;width:7px;height:7px;background:linear-gradient(#fff,#e8ecf4);border:1px solid #b4bccc"></div><div class="a" style="left:35px;top:195.24px;width:3px;height:1px;background:#7a88a8"></div><div class="a" style="left:36px;top:194.24px;width:1px;height:3px;background:#7a88a8"></div>
<svg class="a" style="left:44px;top:189.34px" width="10" height="12" viewBox="0 0 10 12"><path d="M.5 .5h6l3 3v8h-9z" fill="#f6f7fc" stroke="#7c86b4" stroke-width=".8"/><path d="M6.5 .5v3h3" fill="#e4e8f4" stroke="#7c86b4" stroke-width=".6"/><path d="M1.2 .6h3.8v6.2L3.1 5.3 1.2 6.8z" fill="#f4bc34" stroke="#c88a20" stroke-width=".6"/></svg>
<div class="t" style="left:58px;top:190.84px;font-size:8.7px;letter-spacing:-0.1px;color:#1c1c1c;-webkit-text-stroke:0.12px #1c1c1c;width:99px;overflow:hidden">Chapter 4. Text Processing and File Management</div>
<div class="a" style="left:37px;top:207.63px;width:7px;height:0;border-top:1px solid #cfcfcf"></div>
<div class="a" style="left:33px;top:204.63px;width:7px;height:7px;background:linear-gradient(#fff,#e8ecf4);border:1px solid #b4bccc"></div><div class="a" style="left:35px;top:207.63px;width:3px;height:1px;background:#7a88a8"></div><div class="a" style="left:36px;top:206.63px;width:1px;height:3px;background:#7a88a8"></div>
<svg class="a" style="left:44px;top:201.73px" width="10" height="12" viewBox="0 0 10 12"><path d="M.5 .5h6l3 3v8h-9z" fill="#f6f7fc" stroke="#7c86b4" stroke-width=".8"/><path d="M6.5 .5v3h3" fill="#e4e8f4" stroke="#7c86b4" stroke-width=".6"/><path d="M1.2 .6h3.8v6.2L3.1 5.3 1.2 6.8z" fill="#f4bc34" stroke="#c88a20" stroke-width=".6"/></svg>
<div class="t" style="left:58px;top:203.23px;font-size:8.7px;letter-spacing:-0.1px;color:#1c1c1c;-webkit-text-stroke:0.12px #1c1c1c;width:99px;overflow:hidden">Chapter 5. Functional Programming Techniques</div>
<div class="a" style="left:37px;top:220.02px;width:7px;height:0;border-top:1px solid #cfcfcf"></div>
<div class="a" style="left:33px;top:217.02px;width:7px;height:7px;background:linear-gradient(#fff,#e8ecf4);border:1px solid #b4bccc"></div><div class="a" style="left:35px;top:220.02px;width:3px;height:1px;background:#7a88a8"></div><div class="a" style="left:36px;top:219.02px;width:1px;height:3px;background:#7a88a8"></div>
<svg class="a" style="left:44px;top:214.12px" width="10" height="12" viewBox="0 0 10 12"><path d="M.5 .5h6l3 3v8h-9z" fill="#f6f7fc" stroke="#7c86b4" stroke-width=".8"/><path d="M6.5 .5v3h3" fill="#e4e8f4" stroke="#7c86b4" stroke-width=".6"/><path d="M1.2 .6h3.8v6.2L3.1 5.3 1.2 6.8z" fill="#f4bc34" stroke="#c88a20" stroke-width=".6"/></svg>
<div class="t" style="left:58px;top:215.62px;font-size:8.7px;letter-spacing:-0.1px;color:#1c1c1c;-webkit-text-stroke:0.12px #1c1c1c;width:99px;overflow:hidden">Chapter 6. When Things Go Wrong</div>
<div class="a" style="left:37px;top:232.41px;width:7px;height:0;border-top:1px solid #cfcfcf"></div>
<div class="a" style="left:33px;top:229.41px;width:7px;height:7px;background:linear-gradient(#fff,#e8ecf4);border:1px solid #b4bccc"></div><div class="a" style="left:35px;top:232.41px;width:3px;height:1px;background:#7a88a8"></div><div class="a" style="left:36px;top:231.41px;width:1px;height:3px;background:#7a88a8"></div>
<svg class="a" style="left:44px;top:226.51px" width="10" height="12" viewBox="0 0 10 12"><path d="M.5 .5h6l3 3v8h-9z" fill="#f6f7fc" stroke="#7c86b4" stroke-width=".8"/><path d="M6.5 .5v3h3" fill="#e4e8f4" stroke="#7c86b4" stroke-width=".6"/><path d="M1.2 .6h3.8v6.2L3.1 5.3 1.2 6.8z" fill="#f4bc34" stroke="#c88a20" stroke-width=".6"/></svg>
<div class="t" style="left:58px;top:228.01px;font-size:8.7px;letter-spacing:-0.1px;color:#1c1c1c;-webkit-text-stroke:0.12px #1c1c1c;width:99px;overflow:hidden">Chapter 7. Reducing Cultural Barriers</div>
<div class="a" style="left:37px;top:244.80px;width:7px;height:0;border-top:1px solid #cfcfcf"></div>
<div class="a" style="left:33px;top:241.80px;width:7px;height:7px;background:linear-gradient(#fff,#e8ecf4);border:1px solid #b4bccc"></div><div class="a" style="left:35px;top:244.80px;width:3px;height:1px;background:#7a88a8"></div><div class="a" style="left:36px;top:243.80px;width:1px;height:3px;background:#7a88a8"></div>
<svg class="a" style="left:44px;top:238.9px" width="10" height="12" viewBox="0 0 10 12"><path d="M.5 .5h6l3 3v8h-9z" fill="#f6f7fc" stroke="#7c86b4" stroke-width=".8"/><path d="M6.5 .5v3h3" fill="#e4e8f4" stroke="#7c86b4" stroke-width=".6"/><path d="M1.2 .6h3.8v6.2L3.1 5.3 1.2 6.8z" fill="#f4bc34" stroke="#c88a20" stroke-width=".6"/></svg>
<div class="t" style="left:58px;top:240.40px;font-size:8.7px;letter-spacing:-0.1px;color:#1c1c1c;-webkit-text-stroke:0.12px #1c1c1c;width:99px;overflow:hidden">Chapter 8. Skillful Project Maintenance</div>
<div class="a" style="left:37px;top:257.19px;width:7px;height:0;border-top:1px solid #cfcfcf"></div>
<div class="a" style="left:33px;top:254.19px;width:7px;height:7px;background:linear-gradient(#fff,#e8ecf4);border:1px solid #b4bccc"></div><div class="a" style="left:35px;top:257.19px;width:3px;height:1px;background:#7a88a8"></div><div class="a" style="left:36px;top:256.19px;width:1px;height:3px;background:#7a88a8"></div>
<svg class="a" style="left:44px;top:251.29px" width="10" height="12" viewBox="0 0 10 12"><path d="M.5 .5h6l3 3v8h-9z" fill="#f6f7fc" stroke="#7c86b4" stroke-width=".8"/><path d="M6.5 .5v3h3" fill="#e4e8f4" stroke="#7c86b4" stroke-width=".6"/><path d="M1.2 .6h3.8v6.2L3.1 5.3 1.2 6.8z" fill="#f4bc34" stroke="#c88a20" stroke-width=".6"/></svg>
<div class="t" style="left:58px;top:252.79px;font-size:8.7px;letter-spacing:-0.1px;color:#1c1c1c;-webkit-text-stroke:0.12px #1c1c1c;width:99px;overflow:hidden">Appendix A. Writing Backwards-Compatible Code</div>
<div class="a" style="left:37px;top:269.58px;width:7px;height:0;border-top:1px solid #cfcfcf"></div>
<div class="a" style="left:33px;top:266.58px;width:7px;height:7px;background:linear-gradient(#fff,#e8ecf4);border:1px solid #b4bccc"></div><div class="a" style="left:35px;top:269.58px;width:3px;height:1px;background:#7a88a8"></div><div class="a" style="left:36px;top:268.58px;width:1px;height:3px;background:#7a88a8"></div>
<svg class="a" style="left:44px;top:263.68px" width="10" height="12" viewBox="0 0 10 12"><path d="M.5 .5h6l3 3v8h-9z" fill="#f6f7fc" stroke="#7c86b4" stroke-width=".8"/><path d="M6.5 .5v3h3" fill="#e4e8f4" stroke="#7c86b4" stroke-width=".6"/><path d="M1.2 .6h3.8v6.2L3.1 5.3 1.2 6.8z" fill="#f4bc34" stroke="#c88a20" stroke-width=".6"/></svg>
<div class="t" style="left:58px;top:265.18px;font-size:8.7px;letter-spacing:-0.1px;color:#1c1c1c;-webkit-text-stroke:0.12px #1c1c1c;width:99px;overflow:hidden">Appendix B. Leveraging Ruby's Standard Library</div>
<div class="a" style="left:37px;top:281.97px;width:7px;height:0;border-top:1px solid #cfcfcf"></div>
<div class="a" style="left:33px;top:278.97px;width:7px;height:7px;background:linear-gradient(#fff,#e8ecf4);border:1px solid #b4bccc"></div><div class="a" style="left:35px;top:281.97px;width:3px;height:1px;background:#7a88a8"></div><div class="a" style="left:36px;top:280.97px;width:1px;height:3px;background:#7a88a8"></div>
<svg class="a" style="left:44px;top:276.07px" width="10" height="12" viewBox="0 0 10 12"><path d="M.5 .5h6l3 3v8h-9z" fill="#f6f7fc" stroke="#7c86b4" stroke-width=".8"/><path d="M6.5 .5v3h3" fill="#e4e8f4" stroke="#7c86b4" stroke-width=".6"/><path d="M1.2 .6h3.8v6.2L3.1 5.3 1.2 6.8z" fill="#f4bc34" stroke="#c88a20" stroke-width=".6"/></svg>
<div class="t" style="left:58px;top:277.57px;font-size:8.7px;letter-spacing:-0.1px;color:#1c1c1c;-webkit-text-stroke:0.12px #1c1c1c;width:99px;overflow:hidden">Appendix C. Ruby Worst Practices</div>
<div class="a" style="left:37px;top:294.36px;width:7px;height:0;border-top:1px solid #cfcfcf"></div>
<svg class="a" style="left:44px;top:288.46px" width="10" height="12" viewBox="0 0 10 12"><path d="M.5 .5h6l3 3v8h-9z" fill="#f6f7fc" stroke="#7c86b4" stroke-width=".8"/><path d="M6.5 .5v3h3" fill="#e4e8f4" stroke="#7c86b4" stroke-width=".6"/><path d="M1.2 .6h3.8v6.2L3.1 5.3 1.2 6.8z" fill="#f4bc34" stroke="#c88a20" stroke-width=".6"/></svg>
<div class="t" style="left:58px;top:289.96px;font-size:8.7px;letter-spacing:-0.1px;color:#1c1c1c;-webkit-text-stroke:0.12px #1c1c1c;width:99px;overflow:hidden">Index</div>
<div class="a" style="left:28px;top:450.5px;width:129px;height:11.5px;background:#f0f0f0;border-top:1px solid #e6e6e6"></div>
<svg class="a" style="left:32.5px;top:453px" width="4" height="6" viewBox="0 0 4 6"><path d="M3.5 .5 L.5 3 L3.5 5.5z" fill="#333"/></svg>
<svg class="a" style="left:150px;top:453px" width="4" height="6" viewBox="0 0 4 6"><path d="M.5 .5 L3.5 3 L.5 5.5z" fill="#333"/></svg>
<div class="a" style="left:40px;top:451px;width:63px;height:10.5px;border-radius:2px;background:linear-gradient(#f4f4f4,#e0e0e0 50%,#d6d6d6);border:1px solid #b0b0b0"></div>
<div class="a" style="left:68px;top:453.5px;width:6px;height:5px;background:repeating-linear-gradient(90deg,#666 0 1px,transparent 1px 2px)"></div>
<div class="a" style="left:160px;top:80px;width:1px;height:384px;background:#c8c8c8"></div>
<div class="a" style="left:161px;top:80px;width:433px;height:384px;background:#fff;border-left:1px solid #6a6a6a;border-top:1px solid #6a6a6a"></div>
<div class="a" style="left:582px;top:81px;width:11px;height:370px;background:linear-gradient(90deg,#e8e8e8,#f2f2f2 30%,#f0f0f0)"></div>
<svg class="a" style="left:585px;top:86px" width="5" height="4" viewBox="0 0 5 4"><path d="M0 3.5 L2.5 .5 L5 3.5z" fill="#333"/></svg>
<svg class="a" style="left:585px;top:444px" width="5" height="4" viewBox="0 0 5 4"><path d="M0 .5 L2.5 3.5 L5 .5z" fill="#333"/></svg>
<div class="a" style="left:582.5px;top:112px;width:10.5px;height:10.5px;border-radius:2px;background:linear-gradient(90deg,#f6f6f6,#e4e4e4 50%,#d8d8d8);border:1px solid #a8a8a8"></div>
<div class="a" style="left:593px;top:81px;width:1px;height:383px;background:#fff"></div>
<div class="a" style="left:162px;top:451.5px;width:420px;height:12px;background:linear-gradient(#e4e4e4,#f4f4f4 30%,#f0f0f0)"></div>
<div class="a" style="left:582px;top:451.5px;width:11px;height:12px;background:#f0f0f0"></div>
<svg class="a" style="left:166px;top:455px" width="4" height="6" viewBox="0 0 4 6"><path d="M3.5 .5 L.5 3 L3.5 5.5z" fill="#333"/></svg>
<svg class="a" style="left:574px;top:455px" width="4" height="6" viewBox="0 0 4 6"><path d="M.5 .5 L3.5 3 L.5 5.5z" fill="#333"/></svg>
<div class="a" style="left:192.5px;top:452.8px;width:349px;height:10px;border-radius:2px;background:linear-gradient(#f8f8f8,#e6e6e6 50%,#d6d6d6);border:1px solid #b4b4b4"></div>
<div class="a" style="left:364px;top:455.5px;width:6px;height:5px;background:repeating-linear-gradient(90deg,#555 0 1px,transparent 1px 2px)"></div>
<div class="a" style="left:212.7px;top:125px;width:329.5px;height:1px;background:#3a3a3a"></div>
<div class="t" id="H1" style="left:479.5px;top:111.7px;font-size:12.5px;font-weight:bold;color:#1c1c1c;-webkit-text-stroke:0.2px #1c1c1c;transform-origin:0 0;transform:scaleX(0.8610)">CHAPTER 1</div>
<div class="t" id="H2" style="left:307.3px;top:131px;font-size:20.3px;font-weight:bold;color:#111;-webkit-text-stroke:0.3px #111;transform-origin:0 0;transform:scaleX(0.8702)">Driving Code Through Tests</div>
<div class="t" id="L0" style="left:213px;top:259.39px;font-family:'Liberation Serif',serif;font-size:9.1px;letter-spacing:0.16px;color:#2a2a2a;word-spacing:0.476px">If you’ve done some Ruby—even a little bit—you have probably heard of <i>test-driven</i></div>
<div class="t" id="L1" style="left:213px;top:270.49px;font-family:'Liberation Serif',serif;font-size:9.1px;letter-spacing:0.16px;color:#2a2a2a;word-spacing:0.022px"><i>development</i> (TDD). Many advocates present this software practice as the “secret key”</div>
<div class="t" id="L2" style="left:213px;top:281.59px;font-family:'Liberation Serif',serif;font-size:9.1px;letter-spacing:0.16px;color:#2a2a2a;word-spacing:-0.489px">to programming success. However, it’s still a lot of work to convince people that writing</div>
<div class="t" id="L3" style="left:213px;top:292.69px;font-family:'Liberation Serif',serif;font-size:9.1px;letter-spacing:0.16px;color:#2a2a2a;word-spacing:0.542px">tests that are often longer than their implementation code can actually lower the total</div>
<div class="t" id="L4" style="left:213px;top:303.79px;font-family:'Liberation Serif',serif;font-size:9.1px;letter-spacing:0.16px;color:#2a2a2a;word-spacing:0.000px">time spent on a project and increase overall efficiency.</div>
<div class="t" id="L5" style="left:213px;top:320.14px;font-family:'Liberation Serif',serif;font-size:9.1px;letter-spacing:0.16px;color:#2a2a2a;word-spacing:0.618px">In my work, I’ve found most of the claims about the benefits of TDD to be true. My</div>
<div class="t" id="L6" style="left:213px;top:331.29px;font-family:'Liberation Serif',serif;font-size:9.1px;letter-spacing:0.16px;color:#2a2a2a;word-spacing:-0.427px">code is better because I write tests that document the expected behaviors of my software</div>
<div class="t" id="L7" style="left:213px;top:342.44px;font-family:'Liberation Serif',serif;font-size:9.1px;letter-spacing:0.16px;color:#2a2a2a;word-spacing:-0.005px">while verifying that my code is meeting its requirements. By writing automated tests, I</div>
<div class="t" id="L8" style="left:213px;top:353.59px;font-family:'Liberation Serif',serif;font-size:9.1px;letter-spacing:0.16px;color:#2a2a2a;word-spacing:0.038px">can be sure that once I narrow down the source of a bug and fix it, it’ll never resurface</div>
<div class="t" id="L9" style="left:213px;top:364.74px;font-family:'Liberation Serif',serif;font-size:9.1px;letter-spacing:0.16px;color:#2a2a2a;word-spacing:0.306px">without me knowing right away. Because my tests are automated, I can hand my code</div>
<div class="t" id="L10" style="left:213px;top:375.89px;font-family:'Liberation Serif',serif;font-size:9.1px;letter-spacing:0.16px;color:#2a2a2a;word-spacing:0.260px">off to others and mechanically assert my expectations, which does more for me than a</div>
<div class="t" id="L11" style="left:213px;top:387.04px;font-family:'Liberation Serif',serif;font-size:9.1px;letter-spacing:0.16px;color:#2a2a2a;word-spacing:0.000px">handwritten specification ever could do.</div>
<div class="t" id="L12" style="left:213px;top:403.29px;font-family:'Liberation Serif',serif;font-size:9.1px;letter-spacing:0.16px;color:#2a2a2a;word-spacing:0.094px">However, the important thing to take home from this is that automated testing is really</div>
<div class="t" id="L13" style="left:213px;top:414.29px;font-family:'Liberation Serif',serif;font-size:9.1px;letter-spacing:0.16px;color:#2a2a2a;word-spacing:0.588px">no different than what we did before we discovered it. If you’ve ever tried to narrow</div>
<div class="t" id="L14" style="left:213px;top:425.29px;font-family:'Liberation Serif',serif;font-size:9.1px;letter-spacing:0.16px;color:#2a2a2a;word-spacing:1.101px">down a bug with a print statement based on a conditional, you’ve already written a</div>
<div class="t" id="L15" style="left:213px;top:436.29px;font-family:'Liberation Serif',serif;font-size:9.1px;letter-spacing:0.16px;color:#2a2a2a;word-spacing:0.000px">primitive form of automated testing:</div>
<div class="a" style="left:6px;top:462.5px;width:588px;height:20.5px;background:#f2f2f2;border-top:2px solid #c8c8c8"></div>
<div class="a" style="left:6px;top:464.5px;width:588px;height:1px;background:#fcfcfc"></div>
<div class="a" style="left:6px;top:482px;width:588px;height:1px;background:#fafafa"></div>
<div class="t" style="left:7px;top:471px;font-size:8px;color:#111;font-weight:500;letter-spacing:-0.2px;-webkit-text-stroke:0.25px #111">就绪</div>
<svg class="a" style="left:29.2px;top:469.3px" width="11" height="11" viewBox="0 0 11 11"><circle cx="5.5" cy="5.5" r="4.9" fill="#eaf0fa" stroke="#b4bcd4" stroke-width=".9"/><path d="M3.5 3.2h4" stroke="#3c4c80" stroke-width="1"/><path d="M3.3 7.3h4.4L5.5 4.8z" fill="#3c4c80"/></svg>
<svg class="a" style="left:44.8px;top:469.3px" width="11" height="11" viewBox="0 0 11 11"><circle cx="5.5" cy="5.5" r="4.9" fill="#eaf0fa" stroke="#b4bcd4" stroke-width=".9"/><path d="M3.3 6.8h4.4L5.5 4.2z" fill="#3c4c80"/></svg>
<div class="t" style="left:62px;top:471px;font-size:9px;color:#111;word-spacing:1px">1 ( 19 / 330 )</div>
<svg class="a" style="left:125.5px;top:474px" width="5" height="3" viewBox="0 0 5 3"><path d="M0 0h5L2.5 3z" fill="#111"/></svg>
<svg class="a" style="left:136.5px;top:469.3px" width="11" height="11" viewBox="0 0 11 11"><circle cx="5.5" cy="5.5" r="4.9" fill="#eaf0fa" stroke="#b4bcd4" stroke-width=".9"/><path d="M3.3 4.4h4.4L5.5 7z" fill="#3c4c80"/></svg>
<svg class="a" style="left:152.5px;top:469.3px" width="11" height="11" viewBox="0 0 11 11"><circle cx="5.5" cy="5.5" r="4.9" fill="#eaf0fa" stroke="#b4bcd4" stroke-width=".9"/><path d="M3.3 3.8h4.4L5.5 6.3z" fill="#3c4c80"/><path d="M3.5 7.8h4" stroke="#3c4c80" stroke-width="1"/></svg>
<div class="a" style="left:168px;top:467px;width:1px;height:14px;background:#cfcfcf"></div>
<svg class="a" style="left:172.5px;top:471px" width="10" height="8" viewBox="0 0 10 8"><path d="M.5 4 L4.5 .5 V2.3 H9.5 V5.7 H4.5 V7.5z" fill="#f5cc50" stroke="#d8a838" stroke-width=".7"/></svg>
<svg class="a" style="left:188.5px;top:471px" width="10" height="8" viewBox="0 0 10 8"><path d="M9.5 4 L5.5 .5 V2.3 H.5 V5.7 H5.5 V7.5z" fill="#dcdcdc" stroke="#c0c0c0" stroke-width=".7"/></svg>
<div class="a" style="left:203px;top:467px;width:1px;height:14px;background:#cfcfcf"></div>
<div class="a" style="left:206px;top:467px;width:71px;height:15px;background:#fcfcfc"></div>
<div class="t" style="left:209.5px;top:471px;font-size:9px;color:#111">100%</div>
<svg class="a" style="left:265.5px;top:474px" width="5" height="3" viewBox="0 0 5 3"><path d="M0 0h5L2.5 3z" fill="#111"/></svg>
<div class="a" style="left:291.5px;top:468px;width:12.5px;height:13px;background:#d4cdf0;border:1px solid #b4a8e0"></div>
<svg class="a" style="left:293.5px;top:470px" width="9" height="9" viewBox="0 0 9 9"><rect x=".5" y=".5" width="8" height="8" fill="#e0e2f6" stroke="#6a68b0"/></svg>
<svg class="a" style="left:308.5px;top:469.5px" width="10" height="11" viewBox="0 0 10 11"><path d="M.5 4.5V.5M9.5 4.5V.5M.5 4.5h9M.5 6.5h9M.5 6.5v4M9.5 6.5v4" stroke="#8088a8" fill="none"/><rect x="1" y="7" width="8" height="3.5" fill="#e4e8f2"/><rect x="1" y=".5" width="8" height="3.5" fill="#f0f2f8"/></svg>
<svg class="a" style="left:324px;top:469.5px" width="11" height="11" viewBox="0 0 11 11"><rect x=".5" y=".5" width="4" height="4" fill="#e4e8f2" stroke="#8088a8"/><rect x="6.5" y=".5" width="4" height="4" fill="#e4e8f2" stroke="#8088a8"/><rect x=".5" y="6.5" width="4" height="4" fill="#e4e8f2" stroke="#8088a8"/><rect x="6.5" y="6.5" width="4" height="4" fill="#e4e8f2" stroke="#8088a8"/></svg>
<svg class="a" style="left:340px;top:469.5px" width="11" height="11" viewBox="0 0 11 11"><rect x=".5" y=".5" width="4.3" height="10" fill="#e4e8f2" stroke="#8088a8"/><rect x="6.2" y=".5" width="4.3" height="10" fill="#e4e8f2" stroke="#8088a8"/></svg>
<div class="a" style="left:581px;top:467px;width:1px;height:15px;background:#d8d8d8;box-shadow:1px 0 0 #fafafa"></div>
<div class="t" style="left:441px;top:471px;font-size:9px;color:#111;-webkit-text-stroke:0.15px #111"><span style="font-size:9px;font-weight:500;letter-spacing:-0.1px">文件</span>: [7.00 * 9.19 <span style="font-size:9px;font-weight:500;letter-spacing:-0.1px">英寸</span>]</div>
</div></body></html>
